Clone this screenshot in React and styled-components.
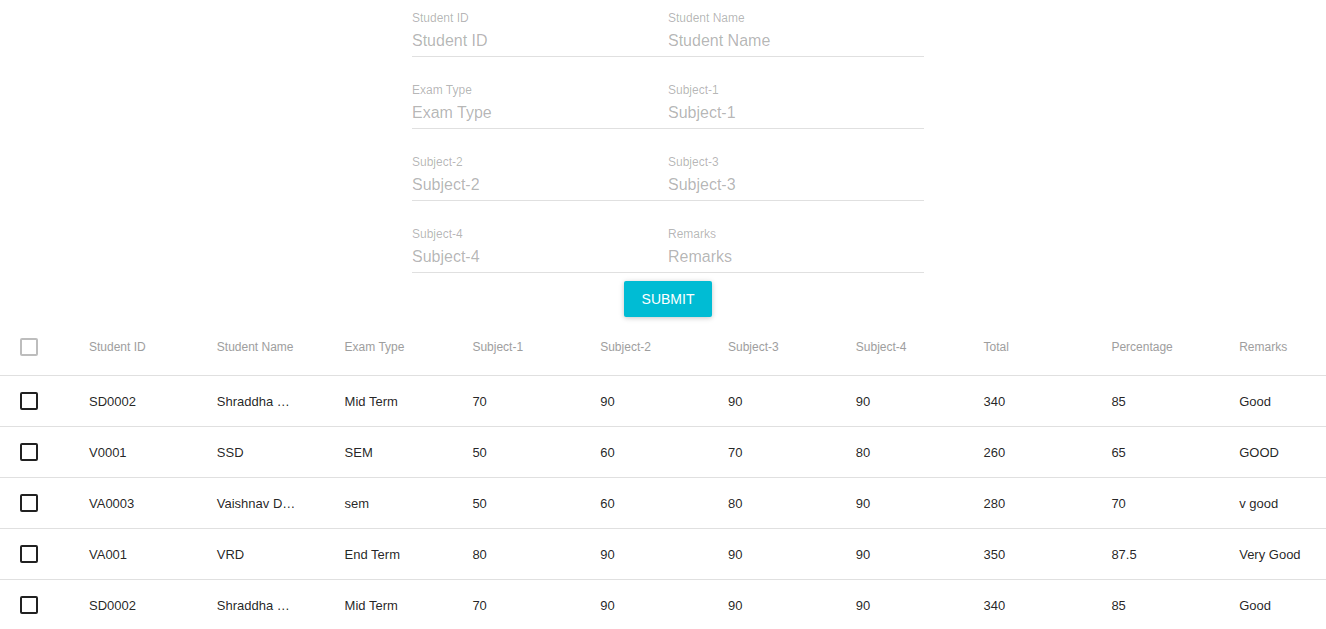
import styled, { createGlobalStyle } from "styled-components";

const GlobalStyle = createGlobalStyle`
  body {
    margin: 0;
    font-family: "Liberation Sans", Arial, sans-serif;
    background: #fff;
  }
`;

const Page = styled.div`
  width: 1326px;
`;

const Form = styled.div`
  width: 512px;
  margin: -8px 0 0 412px;
  display: grid;
  grid-template-columns: 256px 256px;
`;

const Field = styled.div`
  padding-top: 19px;
  padding-bottom: 5px;
  border-bottom: 1px solid #e0e0e0;
  margin-bottom: 7px;
`;

const Label = styled.div`
  font-size: 12px;
  line-height: 14px;
  color: rgba(0, 0, 0, 0.3);
`;

const Hint = styled.div`
  margin-top: 6px;
  font-size: 16px;
  line-height: 20px;
  color: rgba(0, 0, 0, 0.3);
`;

const ButtonRow = styled.div`
  width: 512px;
  margin: 1px 0 0 412px;
  display: flex;
  justify-content: center;
`;

const SubmitButton = styled.button`
  min-width: 88px;
  height: 36px;
  padding: 0 16px;
  border: none;
  border-radius: 2px;
  background: #00bcd4;
  color: #fff;
  font-family: inherit;
  font-size: 14px;
  text-transform: uppercase;
  box-shadow: 0 1px 6px rgba(0, 0, 0, 0.12), 0 1px 4px rgba(0, 0, 0, 0.12);
`;

const Table = styled.div`
  margin-top: 1px;
`;

const Row = styled.div`
  display: grid;
  grid-template-columns: 65px repeat(9, 127.8px) 1fr;
  align-items: center;
  height: ${(p) => (p.$head ? "57px" : "50px")};
  border-bottom: 1px solid #e0e0e0;
`;

const Cell = styled.div`
  padding: 0 24px;
  font-size: ${(p) => (p.$head ? "12px" : "13px")};
  color: ${(p) => (p.$head ? "#9e9e9e" : "rgba(0, 0, 0, 0.87)")};
  white-space: nowrap;
  overflow: hidden;
  text-overflow: ellipsis;
`;

const CheckCell = styled.div`
  padding-left: 20px;
  display: flex;
  align-items: center;
`;

const Box = styled.div`
  width: 18px;
  height: 18px;
  box-sizing: border-box;
  border: 2px solid ${(p) => (p.$head ? "#bdbdbd" : "#212121")};
  border-radius: 2px;
`;

const fields = [
  "Student ID",
  "Student Name",
  "Exam Type",
  "Subject-1",
  "Subject-2",
  "Subject-3",
  "Subject-4",
  "Remarks",
];

const columns = [
  "Student ID",
  "Student Name",
  "Exam Type",
  "Subject-1",
  "Subject-2",
  "Subject-3",
  "Subject-4",
  "Total",
  "Percentage",
  "Remarks",
];

const rows = [
  ["SD0002", "Shraddha Deshmukh", "Mid Term", "70", "90", "90", "90", "340", "85", "Good"],
  ["V0001", "SSD", "SEM", "50", "60", "70", "80", "260", "65", "GOOD"],
  ["VA0003", "Vaishnav Deshmukh", "sem", "50", "60", "80", "90", "280", "70", "v good"],
  ["VA001", "VRD", "End Term", "80", "90", "90", "90", "350", "87.5", "Very Good"],
  ["SD0002", "Shraddha Deshmukh", "Mid Term", "70", "90", "90", "90", "340", "85", "Good"],
];

export default function App() {
  return (
    <Page>
      <GlobalStyle />
      <Form>
        {fields.map((f) => (
          <Field key={f}>
            <Label>{f}</Label>
            <Hint>{f}</Hint>
          </Field>
        ))}
      </Form>
      <ButtonRow>
        <SubmitButton>Submit</SubmitButton>
      </ButtonRow>
      <Table>
        <Row $head>
          <CheckCell>
            <Box $head />
          </CheckCell>
          {columns.map((c) => (
            <Cell $head key={c}>
              {c}
            </Cell>
          ))}
        </Row>
        {rows.map((r, i) => (
          <Row key={i}>
            <CheckCell>
              <Box />
            </CheckCell>
            {r.map((v, j) => (
              <Cell key={j}>{v}</Cell>
            ))}
          </Row>
        ))}
      </Table>
    </Page>
  );
}
